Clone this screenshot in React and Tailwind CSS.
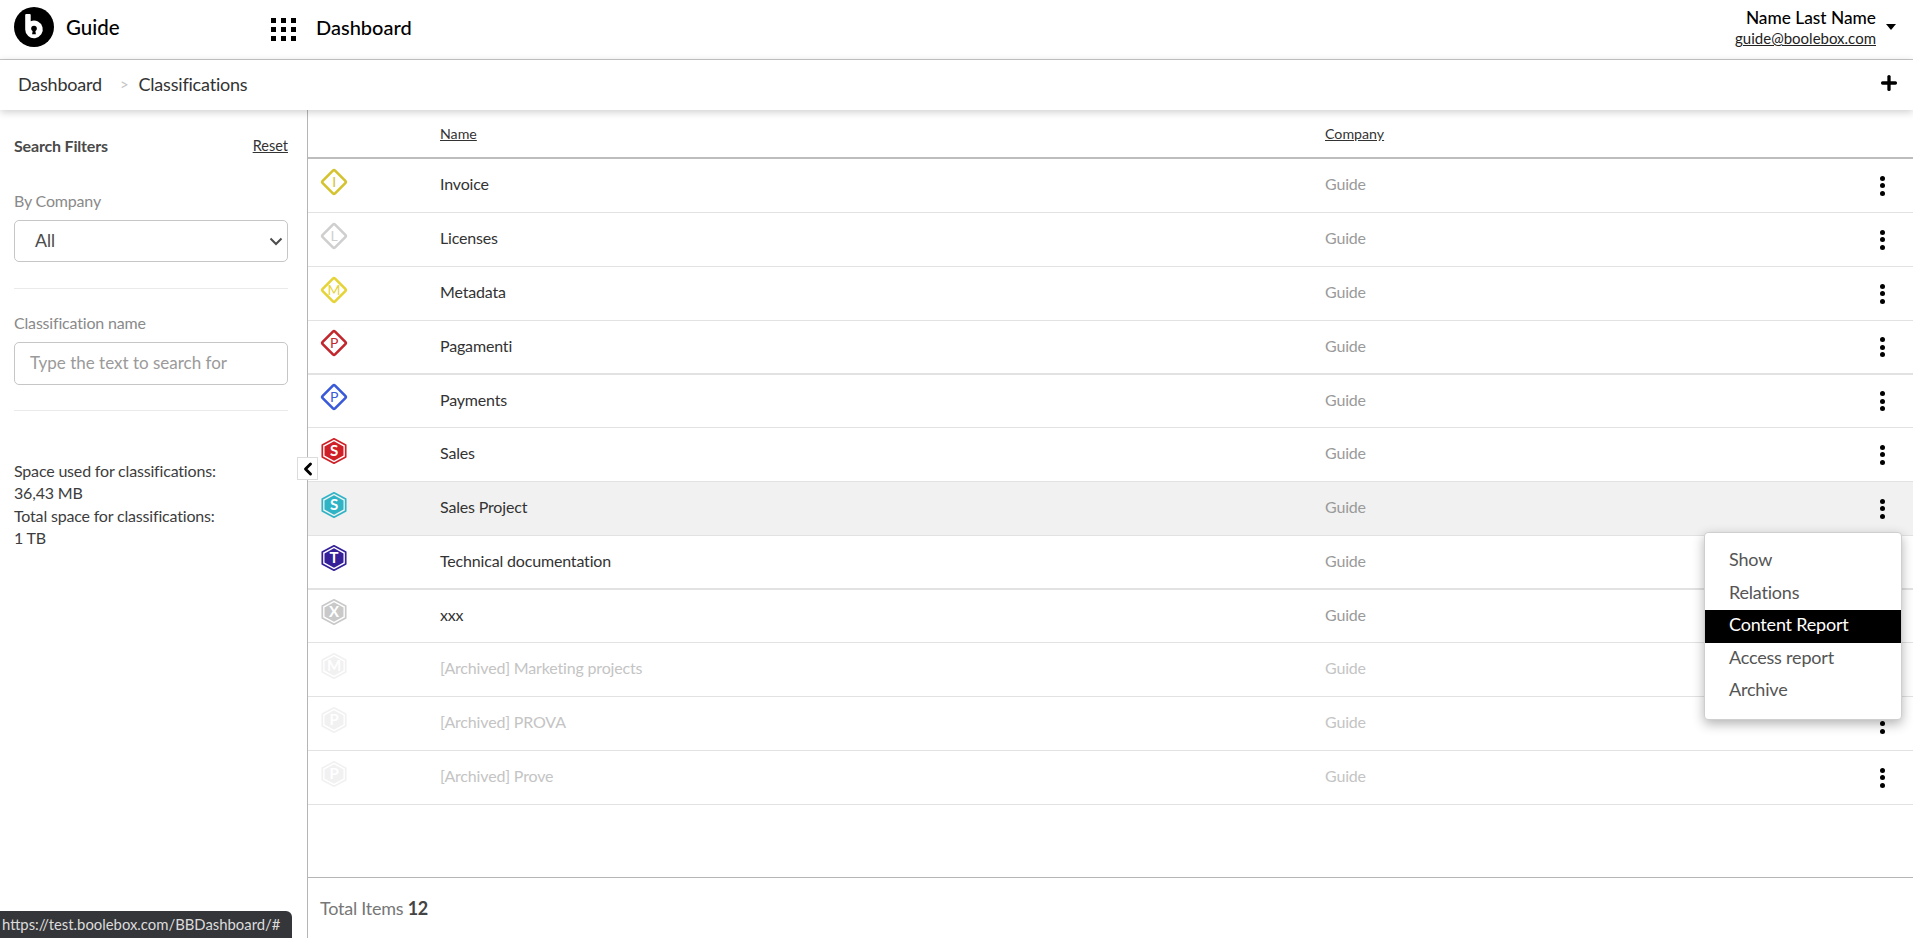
import { ChevronLeft, Plus } from 'lucide-react'

const ROWS = [
  { name: 'Invoice', letter: 'I', shape: 'diamond', color: '#d4c32f', h: 'h-[54px]' },
  { name: 'Licenses', letter: 'L', shape: 'diamond', color: '#cfcfcf', h: 'h-[54px]' },
  { name: 'Metadata', letter: 'M', shape: 'diamond', color: '#e6d337', h: 'h-[54px]' },
  { name: 'Pagamenti', letter: 'P', shape: 'diamond', color: '#c2272d', h: 'h-[54px]', thick: true },
  { name: 'Payments', letter: 'P', shape: 'diamond', color: '#3a5bd9', h: 'h-[53px]' },
  { name: 'Sales', letter: 'S', shape: 'hex', color: '#cf2027', h: 'h-[54px]' },
  { name: 'Sales Project', letter: 'S', shape: 'hex', color: '#2fb4c6', h: 'h-[54px]', active: true },
  { name: 'Technical documentation', letter: 'T', shape: 'hex', color: '#35209a', h: 'h-[54px]', thick: true },
  { name: 'xxx', letter: 'X', shape: 'hex', color: '#c9c9c9', h: 'h-[53px]' },
  { name: '[Archived] Marketing projects', letter: 'M', shape: 'hex', color: '#f1f1f1', h: 'h-[54px]', archived: true },
  { name: '[Archived] PROVA', letter: 'P', shape: 'hex', color: '#f1f1f1', h: 'h-[54px]', archived: true },
  { name: '[Archived] Prove', letter: 'P', shape: 'hex', color: '#f1f1f1', h: 'h-[54px]', archived: true },
]

const MENU = ['Show', 'Relations', 'Content Report', 'Access report', 'Archive']

const BadgeIcon = ({ shape, letter, color }) => {
  if (shape === 'diamond') {
    return (
      <svg width="30" height="30" viewBox="0 0 30 30" className="block">
        <rect x="6.250" y="6.250" width="17.500" height="17.500" rx="1.500" transform="rotate(45 15 15)" fill="none" stroke={color} strokeWidth="2.600" />
        <text x="15" y="20" textAnchor="middle" fontSize="14" fontFamily="Lato" fill={color}>{letter}</text>
      </svg>
    )
  }
  return (
    <svg width="30" height="30" viewBox="0 0 30 30" className="block">
      <path d="M15 2.800 26.700 9.100V20.900L15 27.200 3.300 20.900V9.100Z" fill="none" stroke={color} strokeWidth="1.700" strokeLinejoin="round" />
      <path d="M15 5.300 24.500 10.400V19.600L15 24.700 5.500 19.600V10.400Z" fill={color} />
      <text x="15" y="20.200" textAnchor="middle" fontSize="15" fontWeight="700" fontFamily="Lato" fill="#fff">{letter}</text>
    </svg>
  )
}

const Kebab = () => (
  <div className="flex flex-col gap-[2.500px]">
    <span className="h-[5px] w-[5px] rounded-full bg-black" />
    <span className="h-[5px] w-[5px] rounded-full bg-black" />
    <span className="h-[5px] w-[5px] rounded-full bg-black" />
  </div>
)

export default function App() {
  return (
    <div className="relative h-[938px] w-[1913px] overflow-hidden bg-white font-['Lato',sans-serif] text-[#333]">
      {/* Top bar */}
      <header className="flex h-[60px] items-center border-b border-[#c8c8c8] pb-[5px] pl-[14px] pr-[17px]">
        <div className="flex w-[257px] items-center gap-[12px]">
          <svg width="40" height="40" viewBox="0 0 40 40">
            <circle cx="20" cy="20" r="20" fill="#000" />
            <path d="M11.200 8a1 1 0 0 1 1-1h3.500a1 1 0 0 1 1 1v6.250A8.800 8.800 0 1 1 11.200 22.400Z" fill="#fff" />
            <circle cx="20" cy="21.500" r="2.800" fill="#000" />
            <path d="M18.900 22.500h2.200l.8 4.700h-3.800Z" fill="#000" />
          </svg>
          <span className="text-[20.500px] font-medium text-black">Guide</span>
        </div>
        <div className="mt-[5px] grid grid-cols-3 gap-x-[5px] gap-y-[4px]">
          {[0, 1, 2, 3, 4, 5, 6, 7, 8].map(i => (
            <span key={i} className="h-[5px] w-[5px] bg-black" />
          ))}
        </div>
        <span className="ml-[20px] text-[20px] font-medium text-black">Dashboard</span>
        <div className="ml-auto flex items-center gap-[10px]">
          <div className="mt-[2px] flex flex-col items-end leading-[20px]">
            <span className="text-[17.300px] font-medium text-black">Name Last Name</span>
            <span className="text-[15px] text-[#222] underline">guide@boolebox.com</span>
          </div>
          <span className="h-0 w-0 border-x-[5px] border-t-[6px] border-x-transparent border-t-black" />
        </div>
      </header>

      {/* Breadcrumb */}
      <div className="relative z-10 flex h-[50px] items-center bg-white pb-[2px] pl-[18px] pr-[13px] text-[18px] tracking-[-0.2px] shadow-[0_2px_8px_rgba(0,0,0,0.2)]">
        <span>Dashboard</span>
        <span className="ml-[18px] text-[15px] text-[#c4c4c4]">&gt;</span>
        <span className="ml-[10px]">Classifications</span>
        <Plus size={22} strokeWidth={3.600} className="mb-[3px] ml-auto text-black" />
      </div>

      <div className="flex h-[828px]">
        {/* Filters */}
        <aside className="relative w-[308px] shrink-0 border-r border-[#b5b5b5] pl-[14px] text-[16px] tracking-[-0.18px]">
          <div className="flex w-[274px] items-center justify-between pt-[27px] leading-[18px]">
            <span className="font-bold text-[#4a4a4a]">Search Filters</span>
            <span className="text-[14.500px] tracking-normal text-[#333] underline">Reset</span>
          </div>
          <div className="mt-[37px] leading-[18px] text-[#8a8a8a]">By Company</div>
          <div className="mt-[10px] flex h-[42px] w-[274px] items-center justify-between rounded-[5px] border border-[#c6c6c6] pl-[20px] pr-[4px] text-[18px] tracking-normal text-[#4d4d4d]">
            <span className="font-['Liberation_Sans',sans-serif]">All</span>
            <svg width="14" height="14" viewBox="0 0 14 14">
              <path d="M1.500 4.500 7 10 12.500 4.500" fill="none" stroke="#4d4d4d" strokeWidth="2" />
            </svg>
          </div>
          <div className="mt-[26px] w-[274px] border-t border-[#eaeaea]" />
          <div className="mt-[25px] leading-[18px] text-[#8a8a8a]">Classification name</div>
          <div className="mt-[10px] flex h-[43px] w-[274px] items-center rounded-[5px] border border-[#c6c6c6] pb-[2px] pl-[15px] text-[17px] tracking-normal text-[#9a9a9a]">
            Type the text to search for
          </div>
          <div className="mt-[25px] w-[274px] border-t border-[#eaeaea]" />
          <div className="mt-[49px] leading-[22.300px] text-[#3d3d3d]">
            <div>Space used for classifications:</div>
            <div>36,43 MB</div>
            <div>Total space for classifications:</div>
            <div>1 TB</div>
          </div>
          {/* Collapse handle */}
          <button className="absolute left-[297px] top-[347px] z-10 flex h-[23px] w-[21px] items-center justify-center border border-[#dcdcdc] bg-white text-black">
            <ChevronLeft size={20} strokeWidth={3.500} className="shrink-0" />
          </button>
        </aside>

        {/* Table */}
        <main className="flex min-w-0 flex-1 flex-col">
          <div className="flex h-[49px] items-center border-b-2 border-[#bdbdbd] text-[14.200px] text-[#333]">
            <span className="ml-[132px] w-[885px] underline">Name</span>
            <span className="underline">Company</span>
          </div>
          {ROWS.map(row => (
            <div
              key={row.name}
              className={`flex shrink-0 items-center border-[#e2e2e2] text-[16px] tracking-[-0.17px] ${row.thick ? 'border-b-2' : 'border-b'} ${row.h} ${row.active ? 'bg-[#f1f1f1]' : ''}`}
            >
              <div className="mb-[8px] ml-[11px] w-[121px] shrink-0">
                <BadgeIcon shape={row.shape} letter={row.letter} color={row.color} />
              </div>
              <span className={`mb-[3px] w-[885px] shrink-0 ${row.archived ? 'text-[#c4c4c4]' : 'text-[#333]'}`}>{row.name}</span>
              <span className={`mb-[3px] ${row.archived ? 'text-[#c4c4c4]' : 'text-[#9a9a9a]'}`}>Guide</span>
              <div className="ml-auto mr-[28px]">
                <Kebab />
              </div>
            </div>
          ))}
          <div className="mt-auto flex h-[61px] items-center border-t border-[#b5b5b5] pl-[12px] text-[18px] tracking-[-0.25px] text-[#777]">
            Total Items&nbsp;<b className="font-bold text-[#444]">12</b>
          </div>
        </main>
      </div>

      {/* Row actions menu */}
      <div className="absolute left-[1704px] top-[532px] h-[188px] w-[198px] rounded-[4px] border border-[#cfcfcf] bg-white pt-[12px] shadow-[0_4px_12px_rgba(0,0,0,0.3)]">
        {MENU.map(item => (
          <div
            key={item}
            className={`flex h-[32.500px] items-center pb-[3px] pl-[24px] text-[18px] tracking-[-0.2px] ${item === 'Content Report' ? 'bg-black text-white' : 'text-[#555]'}`}
          >
            {item}
          </div>
        ))}
      </div>

      {/* Browser link status */}
      <div className="absolute bottom-0 left-0 flex h-[27px] w-[292px] items-center rounded-tr-[6px] bg-[#35363a] pl-[2px] text-[14.850px] text-[#dcdcdc]">
        https://test.boolebox.com/BBDashboard/#
      </div>
    </div>
  )
}
